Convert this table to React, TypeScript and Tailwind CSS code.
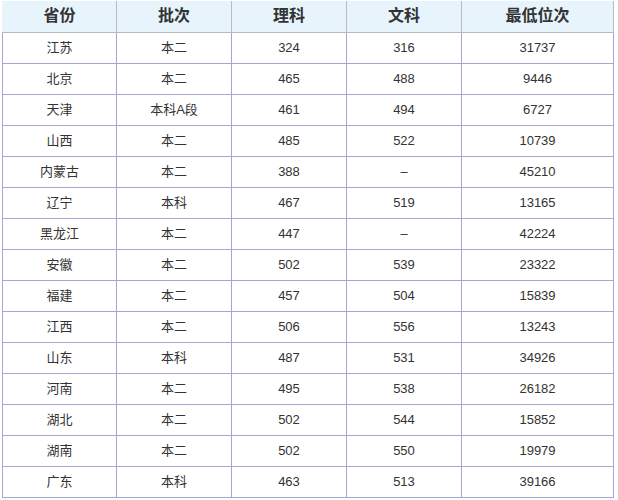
const rows: [string, string, string, string, string][] = [
  ["江苏", "本二", "324", "316", "31737"],
  ["北京", "本二", "465", "488", "9446"],
  ["天津", "本科A段", "461", "494", "6727"],
  ["山西", "本二", "485", "522", "10739"],
  ["内蒙古", "本二", "388", "–", "45210"],
  ["辽宁", "本科", "467", "519", "13165"],
  ["黑龙江", "本二", "447", "–", "42224"],
  ["安徽", "本二", "502", "539", "23322"],
  ["福建", "本二", "457", "504", "15839"],
  ["江西", "本二", "506", "556", "13243"],
  ["山东", "本科", "487", "531", "34926"],
  ["河南", "本二", "495", "538", "26182"],
  ["湖北", "本二", "502", "544", "15852"],
  ["湖南", "本二", "502", "550", "19979"],
  ["广东", "本科", "463", "513", "39166"],
];

const headers = ["省份", "批次", "理科", "文科", "最低位次"];
const widths = ["w-[114px]", "w-[115px]", "w-[115px]", "w-[115px]", "w-[152px]"];

export default function App() {
  return (
    <div
      className="w-[618px] h-[500px] bg-white pt-px pl-[2px] overflow-hidden text-[#333]"
      style={{ fontFamily: '"Liberation Sans", "Noto Sans CJK SC", sans-serif' }}
    >
      <table className="table-fixed border-collapse w-[612px]">
        <colgroup>
          {widths.map((w, i) => (
            <col key={i} className={w} />
          ))}
        </colgroup>
        <thead>
          <tr className="bg-[#e8f4fc]">
            {headers.map((h, i) => (
              <th
                key={h}
                className={`h-[31px] p-0 text-[16px] font-bold text-center border-b border-b-[#b8b8b8] ${
                  i === 0 ? "border-l border-l-[#e8f4fc]" : ""
                } border-r border-r-[#bdbdbd]`}
              >
                {h}
              </th>
            ))}
          </tr>
        </thead>
        <tbody>
          {rows.map(r => (
            <tr key={r[0]}>
              {r.map((c, i) => (
                <td
                  key={i}
                  className="h-[31px] p-0 text-[13px] text-center border border-[#aba3d2]"
                >
                  {c}
                </td>
              ))}
            </tr>
          ))}
        </tbody>
      </table>
    </div>
  );
}
